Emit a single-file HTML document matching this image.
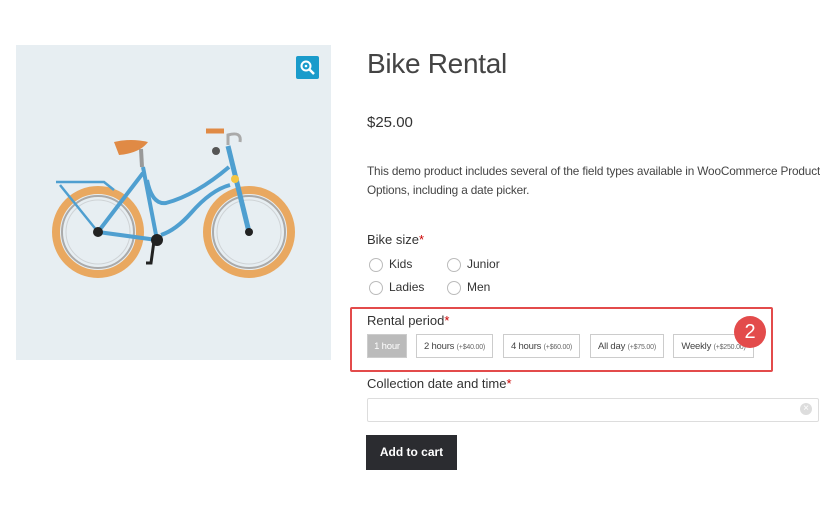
<!DOCTYPE html><html><head><style>
body{margin:0;width:820px;height:510px;background:#fff;font-family:"Liberation Sans",sans-serif;color:#333;position:relative;overflow:hidden}
.a{position:absolute;white-space:nowrap}
.req{color:#c00}
.rad{position:absolute;width:12px;height:12px;border:1px solid #bbb;border-radius:50%;background:#fff}
.btn{position:absolute;top:334px;height:24px;border:1px solid #ccc;background:#fff;font-size:9.5px;line-height:23px;text-align:center;color:#444;box-sizing:border-box;letter-spacing:-0.2px}
.btn small{font-size:7px;color:#666}
</style></head><body>
<div class="a" style="left:16px;top:45px;width:315px;height:315px;background:#e7eef2"></div>
<div class="a" style="left:296px;top:56px;width:23px;height:23px;background:#1a9bcb;border-radius:2px"></div>
<svg class="a" style="left:296px;top:56px" width="23" height="23"><circle cx="10" cy="10" r="4.5" fill="none" stroke="#fff" stroke-width="2"/><line x1="13.5" y1="13.5" x2="18" y2="18" stroke="#fff" stroke-width="2.5"/><circle cx="10" cy="10" r="1.3" fill="#fff"/></svg>
<svg class="a" style="left:16px;top:45px" width="315" height="315">
<g fill="none">
<circle cx="82" cy="187" r="42" stroke="#e9a860" stroke-width="8"/>
<circle cx="82" cy="187" r="36" stroke="#aaa" stroke-width="2"/>
<circle cx="82" cy="187" r="32" stroke="#cfd3d6" stroke-width="1"/>
<circle cx="233" cy="187" r="42" stroke="#e9a860" stroke-width="8"/>
<circle cx="233" cy="187" r="36" stroke="#aaa" stroke-width="2"/>
<circle cx="233" cy="187" r="32" stroke="#cfd3d6" stroke-width="1"/>
<path d="M127 122 L141 195 M82 187 L141 195 M82 187 L127 128" stroke="#4f9fd0" stroke-width="4"/>
<path d="M131 135 Q136 160 150 158 Q180 150 213 122 M145 190 Q160 185 175 168 Q195 145 214 140" stroke="#4f9fd0" stroke-width="4"/>
<path d="M212 101 L233 187" stroke="#4f9fd0" stroke-width="5"/>
<path d="M40 137 L88 137 L98 145 M44 140 L82 187" stroke="#4f9fd0" stroke-width="2.5"/>
<path d="M126 122 L125 104" stroke="#999" stroke-width="4"/>
<path d="M212 100 L212 90 Q226 86 224 97" stroke="#aaa" stroke-width="3"/>
<path d="M190 86 L208 86" stroke="#e08a45" stroke-width="5"/>
</g>
<path d="M98 97 Q115 93 132 97 Q124 108 103 110Z" fill="#e08a45"/>
<circle cx="82" cy="187" r="5" fill="#222"/><circle cx="233" cy="187" r="4" fill="#222"/>
<circle cx="141" cy="195" r="6" fill="#222"/><path d="M138 196 L135 218 L130 218" stroke="#222" stroke-width="3" fill="none"/>
<circle cx="200" cy="106" r="4" fill="#555"/>
<circle cx="219" cy="134" r="4" fill="#f5c542"/>
</svg>
<div class="a" style="left:367px;top:48px;font-size:28px;font-weight:300;color:#444;letter-spacing:-0.3px">Bike Rental</div>
<div class="a" style="left:367px;top:114px;font-size:15px">$25.00</div>
<div class="a" style="left:367px;top:162px;font-size:11.8px;line-height:19px;color:#444;letter-spacing:-0.15px">This demo product includes several of the field types available in WooCommerce Product<br>Options, including a date picker.</div>
<div class="a" style="left:367px;top:232px;font-size:13px">Bike size<span class="req">*</span></div>
<div class="rad" style="left:369px;top:258px"></div><div class="a" style="left:389px;top:257px;font-size:12px">Kids</div>
<div class="rad" style="left:447px;top:258px"></div><div class="a" style="left:467px;top:257px;font-size:12px">Junior</div>
<div class="rad" style="left:369px;top:281px"></div><div class="a" style="left:389px;top:280px;font-size:12px">Ladies</div>
<div class="rad" style="left:447px;top:281px"></div><div class="a" style="left:467px;top:280px;font-size:12px">Men</div>
<div class="a" style="left:350px;top:307px;width:419px;height:61px;border:2px solid #e34b4b;border-radius:2px"></div>
<div class="a" style="left:367px;top:313px;font-size:13px">Rental period<span class="req">*</span></div>
<div class="btn" style="left:367px;width:40px;background:#bbb;color:#fff;border-color:#ccc">1 hour</div>
<div class="btn" style="left:416px;width:77px">2 hours <small>(+$40.00)</small></div>
<div class="btn" style="left:503px;width:77px">4 hours <small>(+$60.00)</small></div>
<div class="btn" style="left:590px;width:74px">All day <small>(+$75.00)</small></div>
<div class="btn" style="left:673px;width:81px">Weekly <small>(+$250.00)</small></div>
<div class="a" style="left:734px;top:316px;width:32px;height:32px;border-radius:50%;background:#e34b4b;color:#fff;font-size:20px;line-height:32px;text-align:center">2</div>
<div class="a" style="left:367px;top:376px;font-size:13px">Collection date and time<span class="req">*</span></div>
<div class="a" style="left:367px;top:398px;width:450px;height:22px;border:1px solid #ddd;border-radius:2px"></div>
<div class="a" style="left:800px;top:403px;width:12px;height:12px;border-radius:50%;background:#ddd;color:#fff;font-size:10px;line-height:12px;text-align:center">×</div>
<div class="a" style="left:366px;top:435px;width:91px;height:35px;background:#2b2c30;color:#fff;font-size:12px;font-weight:bold;line-height:35px;text-align:center">Add to cart</div>
</body></html>
